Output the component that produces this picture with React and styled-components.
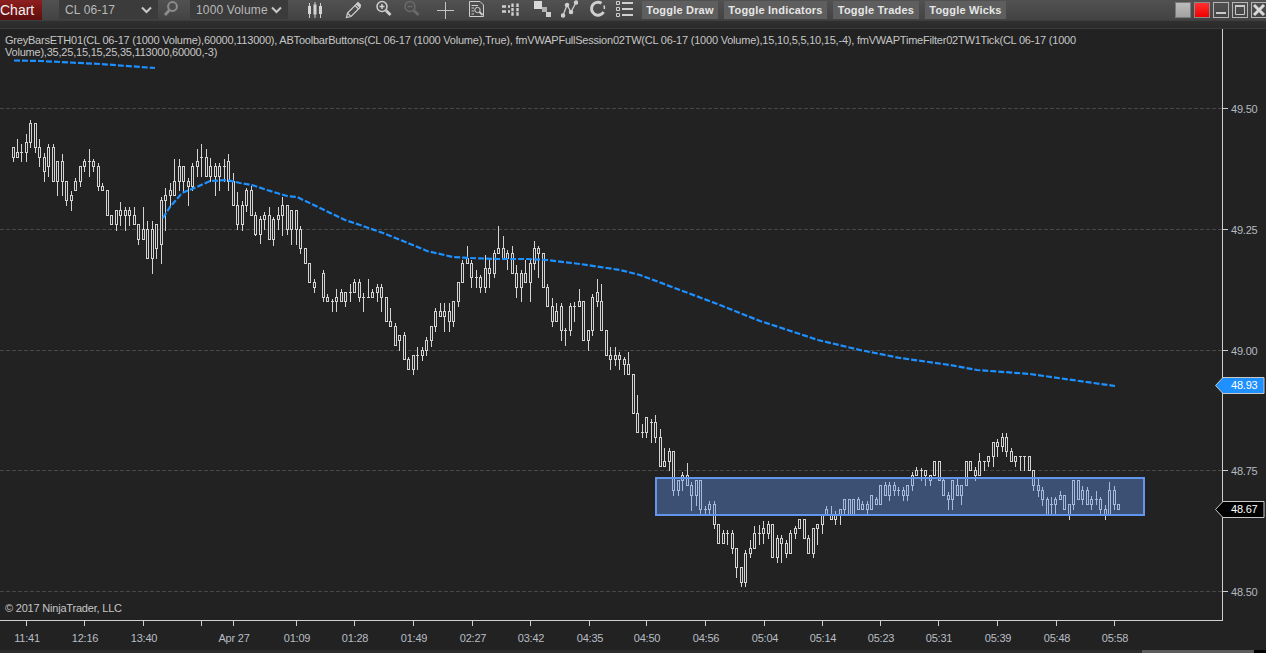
import React from "react";
import styled, { createGlobalStyle } from "styled-components";

const Global = createGlobalStyle`
  html, body { margin: 0; padding: 0; background: #222; overflow: hidden; }
  #root { width: 1266px; height: 653px; }
`;
const FONT = `"Liberation Sans", Arial, sans-serif`;

/* ---- data, read in 3x crop coordinates: [x, wickTop, bodyTop, bodyBottom, wickBottom] ---- */
const seg1 = { ox: 0, oy: 110, bars: [
[40,112,112,142,155],[52,85,127,142,142],[64,100,127,127,155],[79,70,97,127,155],[91,28,40,97,112],[106,40,40,112,127],[118,85,112,142,170],[133,127,142,184,215],[145,100,112,169,200],[160,100,112,214,214],[172,154,154,214,257],[187,130,154,214,257],[199,214,214,271,287],[214,241,256,271,302],[226,202,214,241,241],[241,169,169,214,230],[253,145,154,169,184],[268,115,154,154,200],[280,145,154,169,184],[295,157,169,229,241],[307,217,229,241,241],[322,241,241,316,316],[334,316,316,343,343],[349,301,301,343,360],[361,274,301,316,345],[376,289,301,316,360],[388,289,301,316,345],[403,289,316,343,343],[415,343,343,388,403],[430,289,358,388,388],[442,331,358,445,445],[457,331,358,445,490],[469,343,343,415,445],[484,258,271,403,460],[496,232,256,271,360],[511,217,241,256,290],[523,145,214,256,256],[538,145,169,214,240],[550,169,169,214,244],[565,202,214,230,287],[577,157,169,229,241],[592,115,154,169,199],[604,100,142,142,199],[619,115,142,199,199],[631,142,169,199,214],[646,157,169,199,257],[658,157,169,199,241],[673,145,169,169,214],[685,130,154,214,241],[700,187,214,287,287],[712,244,287,343,358],[727,271,287,343,360],[739,232,241,287,303],[754,226,241,316,316],[766,305,316,373,375],[781,316,329,373,400],[793,305,316,329,358],[808,289,316,388,388],[820,319,329,388,405],[835,289,316,329,358],[847,258,286,316,375],[862,286,286,358,373],[874,301,301,358,403],[889,301,301,358,403],[901,345,358,415,430],[916,415,415,460,460],[928,460,460,517,517],[943,505,517,532,548]
]};
const seg2 = { ox: 320, oy: 220, bars: [
[10,148,160,232,245],[22,220,232,245,245],[37,235,244,244,275],[49,205,232,245,275],[64,205,217,245,245],[76,217,217,245,260],[91,190,217,217,245],[103,175,187,217,217],[118,175,187,232,245],[130,217,232,232,275],[145,175,232,232,232],[157,205,217,232,232],[172,190,202,217,245],[184,190,202,232,275],[199,232,232,304,304],[211,262,304,319,320],[226,307,319,377,377],[238,345,347,361,392],[253,335,347,419,419],[265,408,419,449,449],[280,405,405,449,464],[292,378,405,405,449],[307,378,391,405,420],[319,350,361,391,405],[334,319,319,361,378],[346,262,274,319,333],[361,247,274,289,289],[373,247,274,289,333],[388,247,274,304,333],[400,244,244,304,320],[415,187,187,244,260],[427,118,130,187,187],[442,75,115,130,130],[454,118,130,172,203],[469,148,172,172,203],[481,163,172,203,218],[496,103,145,203,218],[508,115,145,160,203],[523,88,100,160,172],[535,15,85,100,100],[550,45,85,115,115],[562,88,100,115,147],[577,75,100,160,160],[589,133,160,203,233],[604,148,160,203,245],[616,118,160,188,188],[631,117,130,188,245],[643,60,85,130,147],[655,75,85,100,172],[670,100,100,203,203],[682,190,203,260,260],[697,232,260,304,320],[709,247,275,304,304],[724,247,260,332,362],[736,322,332,332,377],[751,247,260,332,347],[763,245,260,260,305],[778,205,245,260,260],[790,245,245,361,361],[805,332,332,361,392],[817,220,232,332,347],[832,175,217,245,260],[844,190,245,332,332],[859,332,332,406,406],[871,378,406,419,449],[886,378,406,419,435],[898,393,406,419,449],[913,408,419,434,464],[925,393,434,464,464]
]};
const seg3 = { ox: 600, oy: 340, bars: [
[100,103,103,220,220],[112,163,220,277,277],[127,250,277,277,293],[139,232,232,277,293],[154,235,247,247,307],[166,222,247,292,307],[181,265,292,380,380],[193,322,364,379,380],[208,322,334,364,392],[220,334,334,452,467],[235,420,420,452,467],[247,393,406,421,452],[262,366,406,436,436],[274,423,436,466,510],[289,420,420,466,495],[301,420,420,508,522],[316,495,508,508,522],[328,480,492,508,522],[343,480,492,553,566],[355,553,553,610,610],[370,568,580,610,610],[382,568,580,580,612],[397,568,580,625,640],[409,625,625,682,713],[424,682,682,727,740],[436,628,640,727,740],[451,598,625,640,653],[463,555,580,625,625],[478,553,580,580,612],[490,540,565,580,610],[505,540,553,580,595],[517,553,553,652,652],[532,583,595,653,668],[544,583,595,610,668],[559,598,610,640,653],[571,568,580,640,640],[586,555,565,580,596],[598,538,538,565,565],[613,538,538,595,595],[625,583,595,640,640],[640,565,565,640,653],[652,553,553,566,612],[667,520,522,553,581],[679,495,508,522,522],[694,495,525,539,539],[706,510,525,539,553],[721,508,508,525,553],[733,478,478,508,522],[748,478,478,522,522],[760,478,478,522,522],[775,468,478,508,508],[787,480,492,508,508],[802,480,492,508,522],[814,465,465,508,508],[829,468,478,492,492],[841,436,436,492,492],[856,423,436,466,466],[868,423,436,466,480],[883,423,436,451,466],[895,438,451,451,466]
]};
const seg4 = { ox: 880, oy: 370, bars: [
[70,350,361,375,390],[82,346,346,375,390],[97,305,316,346,360],[109,290,301,316,316],[124,292,301,301,332],[136,301,301,316,346],[151,316,316,331,346],[163,273,273,316,316],[178,273,273,331,331],[190,320,331,376,376],[205,363,376,388,418],[217,331,331,388,418],[232,320,346,376,376],[244,346,346,376,403],[259,273,273,346,346],[271,273,273,301,301],[286,290,301,316,331],[298,246,273,316,316],[313,273,273,273,301],[325,258,258,273,290],[340,218,218,258,290],[352,205,218,230,258],[367,188,202,230,245],[379,188,202,245,260],[394,232,245,273,273],[406,258,258,273,290],[421,258,258,258,300],[433,258,258,258,300],[448,258,258,301,301],[460,301,301,346,362],[475,318,346,361,378],[487,350,361,388,405],[502,378,388,432,432],[514,378,403,403,432],[526,378,388,403,432],[541,362,376,388,388],[553,376,376,418,418],[568,403,403,432,448],[580,331,331,403,418],[595,331,331,388,388],[607,346,361,388,403],[622,350,361,403,403],[634,375,388,403,418],[649,362,388,388,403],[661,378,388,418,432],[676,403,418,432,448],[688,333,361,432,432],[703,347,361,403,418],[715,403,403,418,418]
]};

const candlePaths = () => {
  const lines = [];
  const rects = [];
  [seg1, seg2, seg3, seg4].forEach(({ ox, oy, bars }) => {
    bars.forEach(([x, wt, bt, bb, wb]) => {
      const c = Math.floor(ox + x / 3);
      const Y = (v) => Math.floor(oy + v / 3) + 0.5;
      const [wT, bT, bB, wB] = [Y(wt), Y(bt), Y(bb), Y(wb)];
      if (wT < bT) lines.push(`M${c + 0.5} ${wT}V${bT}`);
      if (wB > bB) lines.push(`M${c + 0.5} ${bB}V${wB}`);
      if (bT === bB) lines.push(`M${c - 1} ${bT}H${c + 2}`);
      else rects.push({ x: c - 0.5, y: bT, h: bB - bT });
    });
  });
  return { d: lines.join(""), rects };
};
const { d: WICKS, rects: BODIES } = candlePaths();

const VWAP = "M163 218L170 207L182 193L197 187L210 181L227 180L240 183L252 185L267 190L287 196L297 197L320 208L345 220L360 225L383 233L403 241L420 248L427 251L453 257L470 258L497 259L527 259L547 260L580 264L607 268L620 270L640 275L680 290L720 305L760 321L800 334L818 340L860 350L900 358L950 365L977 370L1030 374L1115 386";
const LEGEND_LINE = "M14 60.5L40 61L100 64L155 68";
const GRID = [108, 229, 350, 470, 591];
const PRICES = [["49.50", 108], ["49.25", 229], ["49.00", 350], ["48.75", 470], ["48.50", 591]];
const TIMES = [[26,"11:41"],[84,"12:16"],[143,"13:40"],[201,""],[233,"Apr 27"],[296,"01:09"],[354,"01:28"],[413,"01:49"],[472,"02:27"],[530,"03:42"],[589,"04:35"],[646,"04:50"],[705,"04:56"],[764,"05:04"],[822,"05:14"],[880,"05:23"],[938,"05:31"],[997,"05:39"],[1056,"05:48"],[1114,"05:58"]];

/* ---- page ---- */
const Page = styled.div`
  width: 1266px; height: 653px; display: flex; flex-direction: column;
  background: #222; font-family: ${FONT}; overflow: hidden;
`;
const Toolbar = styled.div`
  height: 21px; flex: none; display: flex; align-items: flex-start;
  background: linear-gradient(#515151, #444 90%, #3c3c3c);
`;
const ChartTab = styled.div`
  width: 42px; height: 20px; flex: none; box-sizing: border-box;
  background: linear-gradient(#8e1f1f, #741414 55%, #5e0f0f);
  color: #f2f2f2; font-size: 14px; line-height: 20px;
`;
const Select = styled.div`
  width: ${(p) => p.$w}px; margin-left: ${(p) => p.$ml}px; height: 19px; flex: none; box-sizing: border-box;
  display: flex; align-items: center; justify-content: space-between; padding: 0 6px 0 6px;
  background: #3b3b3b; color: #b9b9b9; font-size: 12px; letter-spacing: 0.15px;
`;
const Icon = styled.svg`
  flex: none; width: ${(p) => p.$w || 17}px; height: 19px; margin-left: ${(p) => p.$ml}px;
  fill: none; stroke: ${(p) => p.$c || "#cfcfcf"}; stroke-width: ${(p) => p.$sw || 1.5};
`;
const ToggleRow = styled.div`
  margin-left: ${(p) => p.$ml}px; display: flex; gap: 6px; flex: none; padding-top: 1px;
`;
const Toggle = styled.div`
  width: ${(p) => p.$w}px; height: 18px; background: #5e5e5e; color: #e6e6e6; flex: none;
  font-size: 11px; font-weight: 700; line-height: 18px; text-align: center; letter-spacing: 0.2px;
`;
const WindowButtons = styled.div`
  margin-left: auto; display: flex; gap: 3px; padding-top: 2px; flex: none; margin-right: -1px;
`;
const WinButton = styled.div`
  width: 16px; height: 16px; box-sizing: border-box; flex: none;
  background: ${(p) => p.$bg || "transparent"};
  border: 1px solid ${(p) => p.$bd || "#b5b5b5"};
  display: flex; align-items: center; justify-content: center;
`;
const Band = styled.div`
  height: 7px; flex: none; background: linear-gradient(#303030, #2a2a2a);
`;
const ChartFrame = styled.div`
  flex: 1; display: flex; flex-direction: column; min-height: 0; border-top: 1px solid #3a3a3a;
`;
const PlotRow = styled.div`
  height: 592px; flex: none; display: flex;
`;
const Plot = styled.div`
  position: relative; width: 1223px; flex: none; box-sizing: border-box;
  border-right: 1px solid #cfcfcf; border-bottom: 1px solid #cfcfcf;
`;
const PlotSvg = styled.svg`
  display: block; width: 1222px; height: 591px;
`;
const Legend = styled.div`
  position: absolute; left: 5px; top: 5px; width: 1076px;
  color: #c6c6c6; font-size: 11px; line-height: 12px; letter-spacing: -0.215px;
`;
const Copyright = styled.div`
  position: absolute; left: 5px; bottom: 5px; color: #c6c6c6; font-size: 11px; line-height: 13px; letter-spacing: -0.2px;
`;
const PriceAxis = styled.div`
  position: relative; flex: 1;
`;
const PriceTick = styled.div`
  position: absolute; left: 0; width: 42px; height: 13px; display: flex; align-items: center;
  color: #b4bac0; font-size: 11px; letter-spacing: -0.2px;
  &::before { content: ""; width: 5px; height: 1px; background: #cfcfcf; margin-right: 3px; }
`;
const Flag = styled.div`
  position: absolute; left: -8px; top: ${(p) => p.$top}px; width: 50px; height: 17px;
  color: #fff; font-size: 11px; line-height: 17px; letter-spacing: -0.2px;
  & > svg { position: absolute; left: 0; top: 0; }
  & > span { position: absolute; left: 16px; top: 0; }
`;
const FlagShape = styled.path`
  fill: ${(p) => p.$fill}; stroke: #c8c8c8;
`;
const TimeAxis = styled.div`
  position: relative; height: 29px; flex: none;
`;
const TimeMark = styled.div`
  position: absolute; top: 0; width: 40px; margin-left: -20px;
  display: flex; flex-direction: column; align-items: center;
  color: #b8bec4; font-size: 11px; line-height: 13px; letter-spacing: -0.2px;
  &::before { content: ""; width: 1px; height: 5px; background: #cfcfcf; margin-bottom: 6px; margin-left: -1px; }
`;
const ScrollStrip = styled.div`
  flex: 1; background: #2c2c2c; display: flex; justify-content: flex-end;
  &::after { content: ""; width: 12px; background: #000; }
`;
const ScrollThumb = styled.div`
  width: 112px; background: #5c5c5c;
`;

const Chevron = () => (
  <svg width="11" height="8" viewBox="0 0 11 8" fill="none" stroke="#c8c8c8" strokeWidth="2"><path d="M1 1.5L5.5 6L10 1.5" /></svg>
);

const ToolIcons = () => (
  <>
    <Icon $ml={6} $w={14} $c="#8c8c8c" $sw={2} viewBox="0 0 14 19">
      <circle cx="8.5" cy="6.5" r="4.4" /><path d="M5.5 10L1 15" strokeWidth="2.8" />
    </Icon>
    <Select $w={98} $ml={12}>1000 Volume<Chevron /></Select>
    <Icon $ml={19} $w={16} $sw={1} viewBox="0 0 16 19">
      <path d="M2.5 3V18M8 2V18M13.5 3V18" />
      <path d="M1 6h3v8H1zM6.5 4.5h3v10h-3zM12 6h3v8h-3z" fill="#d4d4d4" stroke="none" />
    </Icon>
    <Icon $ml={22} $w={16} $sw={1.2} viewBox="0 0 16 19">
      <path d="M1.5 17.5L2.5 13L11.5 4L15 7.5L6 16.5Z" />
      <path d="M3 13.5L5.5 16M10 5.5L13.5 9" />
      <path d="M12 3.5L13 2.5L16 5.5L15 6.5Z" fill="#cfcfcf" />
    </Icon>
    <Icon $ml={14} $w={17} viewBox="0 0 17 19">
      <circle cx="7" cy="6.5" r="5" /><path d="M4.5 6.5h5M7 4v5" /><path d="M11 10.5L15.5 15" strokeWidth="2.8" />
    </Icon>
    <Icon $ml={11} $w={17} $c="#6a6a6a" viewBox="0 0 17 19">
      <circle cx="7" cy="6.5" r="5" /><path d="M4.5 6.5h5" /><path d="M11 10.5L15.5 15" strokeWidth="2.8" />
    </Icon>
    <Icon $ml={17} $w={17} $c="#c4c4c4" $sw={1} viewBox="0 0 17 19">
      <path d="M0 10.5H17M8.5 2V19" />
    </Icon>
    <Icon $ml={14} $w={17} $sw={1} viewBox="0 0 17 19">
      <path d="M1.5 1.5H12L15.5 5V16.5H1.5Z" /><path d="M3.5 5.5H10M3.5 8H6M3.5 11H6M3.5 14H6" />
      <circle cx="9.5" cy="10" r="2.7" /><path d="M11.5 12L14.5 15" strokeWidth="1.8" />
    </Icon>
    <Icon $ml={17} $w={17} $sw={2.4} viewBox="0 0 17 19">
      <path d="M10.5 3.5V16.5M15.5 3.5V16.5" strokeDasharray="3.4 1" />
      <path d="M0 6.5H4M6 6.5H8M0 11.5H4M6 11.5H8" />
    </Icon>
    <Icon $ml={15} $w={17} viewBox="0 0 17 19">
      <rect x="0" y="1" width="8" height="8" fill="#d8d8d8" stroke="none" /><rect x="8" y="7" width="5" height="5" fill="#b0b0b0" stroke="none" /><rect x="12" y="12" width="5" height="5" fill="#cfcfcf" stroke="none" />
    </Icon>
    <Icon $ml={10} $w={17} $sw={1.3} viewBox="0 0 17 19">
      <path d="M2 15.5L6 5L10 12L15 2.5" />
      <circle cx="2" cy="15.5" r="1.6" fill="#cfcfcf" /><circle cx="6" cy="5" r="1.6" fill="#cfcfcf" /><circle cx="10" cy="12" r="1.6" fill="#cfcfcf" /><circle cx="15" cy="2.5" r="1.6" fill="#cfcfcf" />
    </Icon>
    <Icon $ml={11} $w={17} $sw={3} viewBox="0 0 17 19">
      <path d="M12.5 3.2A6.5 6.5 0 1 0 14.6 12" /><path d="M15 5.5A6.5 6.5 0 0 1 15.3 9" strokeWidth="1.6" />
    </Icon>
    <Icon $ml={10} $w={17} $sw={1} viewBox="0 0 17 19">
      <path d="M0.5 1.5h3v3h-3zM0.5 7.5h3v3h-3zM0.5 13.5h3v3h-3z" />
      <path d="M6 3H17M6 9H17M6 15H17" strokeWidth="2" />
    </Icon>
  </>
);

const FLAG_PATH = "M0.5 8.5L7.5 1V0.5H49V16.5H7.5V16Z";

export default function App() {
  return (
    <Page>
      <Global />
      <Toolbar>
        <ChartTab>Chart</ChartTab>
        <Select $w={99} $ml={17}>CL 06-17<Chevron /></Select>
        <ToolIcons />
        <ToggleRow $ml={9}>
          <Toggle $w={76}>Toggle Draw</Toggle>
          <Toggle $w={103}>Toggle Indicators</Toggle>
          <Toggle $w={86}>Toggle Trades</Toggle>
          <Toggle $w={81}>Toggle Wicks</Toggle>
        </ToggleRow>
        <WindowButtons>
          <WinButton $bg="linear-gradient(#bcbcbc, #a2a2a2)" $bd="#7a7a7a" />
          <WinButton $bg="linear-gradient(#ff3030, #f00000)" $bd="#8a8a8a" />
          <WinButton>
            <svg width="14" height="14" viewBox="0 0 14 14"><rect x="2" y="9" width="10" height="2" fill="#c8c8c8" /></svg>
          </WinButton>
          <WinButton>
            <svg width="14" height="14" viewBox="0 0 14 14" fill="none" stroke="#c8c8c8"><path d="M2.5 3.5h9v8h-9z" /><path d="M2 3h10" strokeWidth="2" /></svg>
          </WinButton>
          <WinButton>
            <svg width="14" height="14" viewBox="0 0 14 14" fill="none" stroke="#d8d8d8" strokeWidth="3"><path d="M2 2L12 12M12 2L2 12" /></svg>
          </WinButton>
        </WindowButtons>
      </Toolbar>
      <Band />
      <ChartFrame>
        <PlotRow>
          <Plot>
            <PlotSvg viewBox="0 29 1222 591">
              <g stroke="#474747" strokeDasharray="4 2">
                {GRID.map((y) => <path key={y} d={`M0 ${y + 0.5}H1222`} />)}
              </g>
              <g stroke="#d3d3d3" fill="#222" shapeRendering="crispEdges">
                <path d={WICKS} />
                {BODIES.map((b, i) => <rect key={i} x={b.x} y={b.y} width="2" height={b.h} />)}
              </g>
              <g fill="none" stroke="#1e90ff" strokeWidth="2.2" strokeDasharray="6 2">
                <path d={VWAP} />
                <path d={LEGEND_LINE} />
              </g>
              <rect x="656" y="478" width="488" height="37" fill="#6495ed" fillOpacity="0.4" stroke="#6495ed" strokeWidth="2" shapeRendering="crispEdges" />
            </PlotSvg>
            <Legend>GreyBarsETH01(CL 06-17 (1000 Volume),60000,113000), ABToolbarButtons(CL 06-17 (1000 Volume),True), fmVWAPFullSession02TW(CL 06-17 (1000 Volume),15,10,5,5,10,15,-4), fmVWAPTimeFilter02TW1Tick(CL 06-17 (1000 Volume),35,25,15,15,25,35,113000,60000,-3)</Legend>
            <Copyright>© 2017 NinjaTrader, LLC</Copyright>
          </Plot>
          <PriceAxis>
            {PRICES.map(([label, y]) => (
              <PriceTick key={label} style={{ top: y - 35 }}>{label}</PriceTick>
            ))}
            <Flag $top={348}>
              <svg width="50" height="17" viewBox="0 0 50 17"><FlagShape $fill="#1e90ff" d={FLAG_PATH} /></svg>
              <span>48.93</span>
            </Flag>
            <Flag $top={472}>
              <svg width="50" height="17" viewBox="0 0 50 17"><FlagShape $fill="#000" d={FLAG_PATH} /></svg>
              <span>48.67</span>
            </Flag>
          </PriceAxis>
        </PlotRow>
        <TimeAxis>
          {TIMES.map(([x, label]) => (
            <TimeMark key={x} style={{ left: x + 1 }}>{label}</TimeMark>
          ))}
        </TimeAxis>
        <ScrollStrip><ScrollThumb /></ScrollStrip>
      </ChartFrame>
    </Page>
  );
}
